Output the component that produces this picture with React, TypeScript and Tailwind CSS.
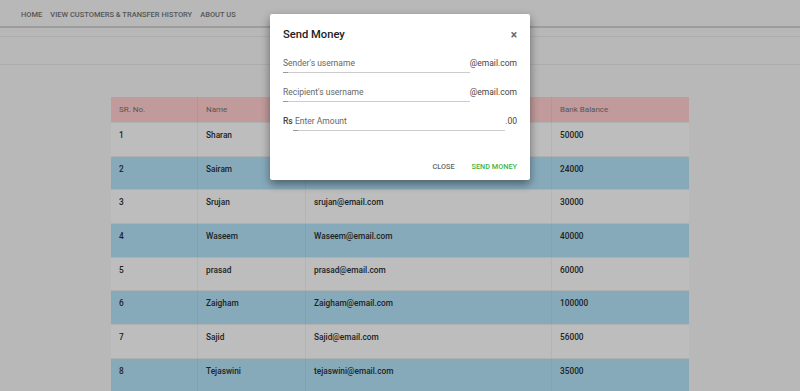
import React from "react";

const rows = [
  ["1", "Sharan", "sharan@email.com", "50000"],
  ["2", "Sairam", "sairam@email.com", "24000"],
  ["3", "Srujan", "srujan@email.com", "30000"],
  ["4", "Waseem", "Waseem@email.com", "40000"],
  ["5", "prasad", "prasad@email.com", "60000"],
  ["6", "Zaigham", "Zaigham@email.com", "100000"],
  ["7", "Sajid", "Sajid@email.com", "56000"],
  ["8", "Tejaswini", "tejaswini@email.com", "35000"],
];

export default function App() {
  return (
    <div
      className="relative w-[800px] h-[391px] overflow-hidden bg-[#b8b8b8] text-[#222]"
      style={{ fontFamily: "Roboto, 'Liberation Sans', sans-serif" }}
    >
      <nav className="h-[28px] flex items-center gap-[8px] pl-[21px] pt-[3px] text-[7.5px] font-medium text-[#555] uppercase border-b-2 border-[#9c9c9c]">
        <span>Home</span>
        <span>View Customers &amp; Transfer History</span>
        <span>About Us</span>
      </nav>
      <div className="mt-[8px] h-[29px] border-t border-b border-[#adadad]" />
      <div className="mt-[32px] mx-[111px]">
        <div className="grid grid-cols-[86px_108px_246px_138px] bg-[#c19b9b] h-[25px] items-center text-[8px] text-[#555]">
          <div className="pl-[8px]">SR. No.</div>
          <div className="pl-[8px] border-l border-[#b89393] h-full flex items-center">Name</div>
          <div className="pl-[8px] border-l border-[#b89393] h-full flex items-center">Email</div>
          <div className="pl-[8px] border-l border-[#b89393] h-full flex items-center">Bank Balance</div>
        </div>
        {rows.map((r, i) => (
          <div
            key={r[0]}
            className={`grid grid-cols-[86px_108px_246px_138px] h-[33.7px] text-[8.3px] font-medium text-[#222] border-t border-[#b0b0b0] ${
              i % 2 === 0 ? "bg-[#bdbdbd]" : "bg-[#87aabb]"
            }`}
          >
            {r.map((c, j) => (
              <div
                key={j}
                className={`pl-[8px] pt-[6px] ${j > 0 ? (i % 2 === 0 ? "border-l border-[#b4b4b4]" : "border-l border-[#80a3b4]") : ""}`}
              >
                {c}
              </div>
            ))}
          </div>
        ))}
      </div>

      <div className="absolute left-[270px] top-[14px] w-[260px] h-[166px] bg-white rounded-[2px] shadow-[0_4px_10px_rgba(0,0,0,0.45)] px-[13px] pt-[14px]">
        <div className="flex items-center justify-between h-[14px]">
          <h2 className="text-[11.2px] font-medium text-[#222]">Send Money</h2>
          <span className="text-[12px] font-bold text-[#666] leading-none">×</span>
        </div>
        <div className="mt-[15px] flex items-start h-[16px] text-[8.5px] leading-[12px]">
          <div className="w-[187px] h-[16px] border-b border-[#ccc] text-[#666] relative">
            Sender's username
            <span className="absolute left-0 -bottom-[1px] w-[5px] h-[1px] bg-[#999]" />
          </div>
          <span className="text-[#444] ml-auto">@email.com</span>
        </div>
        <div className="mt-[13px] flex items-start h-[16px] text-[8.5px] leading-[12px]">
          <div className="w-[187px] h-[16px] border-b border-[#ccc] text-[#666] relative">
            Recipient's username
            <span className="absolute left-0 -bottom-[1px] w-[5px] h-[1px] bg-[#999]" />
          </div>
          <span className="text-[#444] ml-auto">@email.com</span>
        </div>
        <div className="mt-[13px] flex items-start h-[16px] text-[8.5px] leading-[12px]">
          <span className="text-[#444] font-medium w-[10px]">Rs</span>
          <div className="w-[212px] h-[16px] border-b border-[#ccc] text-[#666] relative">
            <span className="absolute left-[2px] top-0 whitespace-nowrap">Enter Amount</span>
            <span className="absolute left-0 -bottom-[1px] w-[5px] h-[1px] bg-[#999]" />
          </div>
          <span className="ml-auto text-[#444]">.00</span>
        </div>
        <div className="mt-[31px] flex justify-end gap-[17px] text-[7.3px] font-medium uppercase">
          <span className="text-[#666]">Close</span>
          <span className="text-[#3bb54a]">Send Money</span>
        </div>
      </div>
    </div>
  );
}
